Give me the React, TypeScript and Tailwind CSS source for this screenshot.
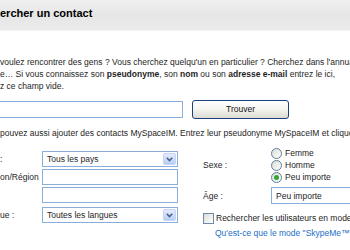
import React from 'react';

const SelectBox: React.FC<{ value: string }> = ({ value }) => (
  <div className="flex items-center w-[136px] h-[16px] border border-[#8aaedb] bg-white pl-[4px] pr-px">
    <span className="flex-1 truncate">{value}</span>
    <span className="flex items-center justify-center w-[13px] h-[12px] rounded-[2px] bg-gradient-to-b from-[#e4ecfd] to-[#b9cdf5] border border-[#c3d4f6]">
      <svg width="7" height="5" viewBox="0 0 7 5">
        <path d="M0.8 0.8 L3.5 3.6 L6.2 0.8" fill="none" stroke="#4d6185" strokeWidth="1.6" />
      </svg>
    </span>
  </div>
);

const TextBox: React.FC<{ value?: string; className?: string }> = ({ value = '', className = '' }) => (
  <div className={`flex items-center h-[16px] border border-[#8aaedb] bg-white pl-[4px] shrink-0 ${className}`}>
    <span>{value}</span>
  </div>
);

const Radio: React.FC<{ label: string; checked?: boolean }> = ({ label, checked }) => (
  <div className="flex items-center h-[12px] gap-[3px]">
    <span className="flex items-center justify-center w-[11px] h-[11px] rounded-full border border-[#5f7e9e] bg-gradient-to-br from-[#dcdcd6] to-white">
      {checked && <span className="w-[5px] h-[5px] rounded-full bg-[#2fa82f]" />}
    </span>
    <span>{label}</span>
  </div>
);

export default function App() {
  return (
    <div className="w-[350px] h-[250px] overflow-hidden bg-white text-[8.5px] leading-[12px] text-[#1e1e1e] font-['Liberation_Sans',Arial,sans-serif] whitespace-nowrap">
      <div className="h-[31px] flex items-center pb-[5px] bg-gradient-to-b from-[#f0f0f0] via-[#e6e6e6] to-[#ebebeb] border-b border-[#f3f3f3]">
        <span className="text-[11px] font-bold text-black">ercher un contact</span>
      </div>

      <div className="pt-[25px]">
        <p>voulez rencontrer des gens ? Vous cherchez quelqu'un en particulier ? Cherchez dans l'annuaire</p>
        <p>
          e… Si vous connaissez son <b>pseudonyme</b>, son <b>nom</b> ou son <b>adresse e-mail</b> entrez le ici,
        </p>
        <p>z ce champ vide.</p>
      </div>

      <div className="mt-[8px] flex items-center h-[18px]">
        <div className="w-[183px] h-[17px] border border-[#8aaedb] border-l-0 bg-white" />
        <button className="ml-[9px] w-[97px] h-[19px] rounded-[3px] border border-[#1b3f7a] bg-gradient-to-b from-white via-[#f4f4f0] to-[#dcdcd2] text-[#111]">
          Trouver
        </button>
      </div>

      <p className="mt-[9px]">pouvez aussi ajouter des contacts MySpaceIM. Entrez leur pseudonyme MySpaceIM et cliquez</p>

      <div className="flex mt-[12px]">
        <div className="w-[203px] shrink-0 flex flex-col gap-[2px]">
          <div className="flex items-center">
            <span className="w-[42px]">:</span>
            <SelectBox value="Tous les pays" />
          </div>
          <div className="flex items-center">
            <span className="w-[42px]">on/Région</span>
            <TextBox className="w-[136px]" />
          </div>
          <div className="flex items-center">
            <span className="w-[42px]" />
            <TextBox className="w-[136px]" />
          </div>
          <div className="flex items-center mt-[2px]">
            <span className="w-[42px]">ue :</span>
            <SelectBox value="Toutes les langues" />
          </div>
        </div>

        <div className="flex-1 min-w-0 -mt-[4px]">
          <div className="flex items-center">
            <span className="w-[68px] shrink-0">Sexe :</span>
            <div className="flex flex-col">
              <Radio label="Femme" />
              <Radio label="Homme" />
              <Radio label="Peu importe" checked />
            </div>
          </div>
          <div className="flex items-center mt-[4px]">
            <span className="w-[68px] shrink-0">Âge :</span>
            <TextBox value="Peu importe" className="w-[110px] h-[17px]" />
          </div>
          <div className="flex items-center mt-[8px] gap-[2px]">
            <span className="w-[11px] h-[11px] shrink-0 border border-[#6f8aa6] bg-gradient-to-br from-[#dcdcd6] to-white" />
            <span>Rechercher les utilisateurs en mode</span>
          </div>
          <p className="pl-[12px] mt-[3px] text-[#1a6ec8]">Qu'est-ce que le mode "SkypeMe™"</p>
        </div>
      </div>
    </div>
  );
}
